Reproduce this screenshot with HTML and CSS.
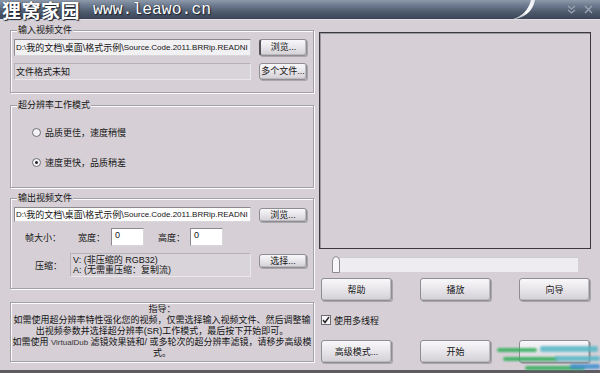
FILE: index.html
```html
<!DOCTYPE html>
<html lang="zh-CN">
<head>
<meta charset="utf-8">
<title>狸窝家园 www.leawo.cn</title>
<link rel="stylesheet" href="styles.css">
</head>
<body>
<div class="window">
  <div class="titlebar">
    <span class="title-cn">狸窝家园</span><span class="title-url">www.leawo.cn</span>
    <svg class="swoosh" width="26" height="19" viewBox="0 0 26 19">
      <defs>
        <linearGradient id="sw" x1="0" y1="1" x2="1" y2="0">
          <stop offset="0" stop-color="#9aa3ae"/>
          <stop offset="0.5" stop-color="#ffffff"/>
          <stop offset="1" stop-color="#e8ecf0"/>
        </linearGradient>
      </defs>
      <path d="M1 19 Q15 15 19 0 L23 0 Q20 15 4 19 Z" fill="url(#sw)"/>
    </svg>
    <div class="controls">
      <svg width="9" height="9" viewBox="0 0 9 9"><path d="M1 1 L4.5 4 L8 1 M1 5 L4.5 8 L8 5" fill="none" stroke="#9da7b3" stroke-width="1.2"/></svg>
      <svg width="9" height="9" viewBox="0 0 9 9"><path d="M1 1 L8 8 M8 1 L1 8" fill="none" stroke="#9da7b3" stroke-width="1.3"/></svg>
    </div>
  </div>

  <div class="main">
    <div class="left">
      <fieldset class="group g1">
        <legend>输入视频文件</legend>
        <div class="row">
          <div class="field path ro"><span class="lat">D:\</span>我的文档\桌面\格式示例\<span class="lat">Source.Code.2011.BRRip.READNI</span></div>
          <button class="btn sm focus">浏览...</button>
        </div>
        <div class="row r2">
          <div class="field path flat">文件格式未知</div>
          <button class="btn sm">多个文件...</button>
        </div>
      </fieldset>

      <fieldset class="group g2">
        <legend>超分辨率工作模式</legend>
        <label class="radio"><span class="dot"></span>品质更佳，速度稍慢</label>
        <label class="radio r2"><span class="dot on"></span>速度更快，品质稍差</label>
      </fieldset>

      <fieldset class="group g3">
        <legend>输出视频文件</legend>
        <div class="row out">
          <div class="field path"><span class="lat">D:\</span>我的文档\桌面\格式示例\<span class="lat">Source.Code.2011.BRRip.READNI</span></div>
          <button class="btn sm">浏览...</button>
        </div>
        <div class="row size">
          <span class="lbl l-frame">帧大小：</span>
          <span class="lbl l-w">宽度：</span>
          <div class="field num">0</div>
          <span class="lbl l-h">高度：</span>
          <div class="field num">0</div>
        </div>
        <div class="row codec">
          <span class="lbl l-c">压缩：</span>
          <div class="field flat multi">V: (非压缩的 RGB32)<br>A: (无需重压缩：复制流)</div>
          <button class="btn sm">选择...</button>
        </div>
      </fieldset>

      <div class="guide">
        指导：<br>
        如需使用超分辨率特性强化您的视频，仅需选择输入视频文件、然后调整输<br>
        出视频参数并选择超分辨率(SR)工作模式，最后按下开始即可。<br>
        如需使用 <span class="small">VirtualDub</span> 滤镜效果链和/ 或多轮次的超分辨率滤镜，请移步高级模<br>
        式。
      </div>
    </div>

    <div class="right">
      <div class="preview"></div>
      <div class="slider">
        <svg class="thumb" width="8" height="17" viewBox="0 0 8 17"><path d="M0.5 16.5 V5 Q0.5 1 4 0.5 Q7.5 1 7.5 5 V16.5 Z" fill="#f7f6f8" stroke="#8d8a90"/></svg>
        <span class="track"></span>
      </div>
      <div class="btn-row">
        <button class="btn lg">帮助</button>
        <button class="btn lg">播放</button>
        <button class="btn lg">向导</button>
      </div>
      <label class="check">
        <span class="box"><svg width="8" height="8" viewBox="0 0 8 8"><path d="M1 4 L3 6.5 L7 1" fill="none" stroke="#222" stroke-width="1.4"/></svg></span>使用多线程
      </label>
      <div class="btn-row r2">
        <button class="btn lg">高级模式...</button>
        <button class="btn lg">开始</button>
        <button class="btn lg"></button>
      </div>
    </div>
  </div>

  <div class="watermark">
    <span class="wm g a"></span>
    <span class="wm g b"></span>
    <span class="wm g c"></span>
    <span class="wm t d"></span>
    <span class="wm t e"></span>
    <span class="wm bl f"></span>
  </div>
</div>
</body>
</html>
```

FILE: styles.css
```css
html, body {
  margin: 0;
  padding: 0;
}

body {
  width: 600px;
  height: 373px;
  overflow: hidden;
  background: #d6d0d6;
  font-family: "Liberation Sans", "Noto Sans CJK SC", sans-serif;
  font-size: 9px;
  color: #141414;
}

.window {
  position: relative;
  height: 373px;
  box-sizing: border-box;
  border-bottom: 3px solid #5e5b61;
}

/* ---------- title bar ---------- */
.titlebar {
  position: relative;
  height: 20px;
  box-sizing: border-box;
  border-bottom: 1px solid #e2dee4;
  background: linear-gradient(#8d99aa 0%, #6b798e 30%, #4d596c 65%, #3b4556 100%);
  display: flex;
  align-items: center;
  padding-left: 2px;
  color: #fff;
  white-space: nowrap;
}

.title-cn {
  font-family: "Noto Sans CJK SC", sans-serif;
  font-size: 19px;
  line-height: 19px;
  letter-spacing: 0.5px;
  font-weight: 700;
  text-shadow: 0 0 1px #1b2230, 1px 1px 1px #1b2230;
}

.title-url {
  font-family: "Liberation Mono", monospace;
  font-size: 16.4px;
  line-height: 19px;
  margin-left: 13px;
  text-shadow: 0 0 1px #1b2230, 1px 1px 1px #1b2230;
}

.swoosh {
  position: absolute;
  left: 512px;
  top: 0;
}

.controls {
  position: absolute;
  right: 7px;
  top: 5px;
  display: flex;
  gap: 8px;
}

/* ---------- layout ---------- */
.main {
  display: flex;
  gap: 4px;
  padding: 5px 0 0 10px;
}

.left {
  width: 305px;
  display: flex;
  flex-direction: column;
}

.right {
  width: 272px;
  display: flex;
  flex-direction: column;
}

/* ---------- group boxes ---------- */
.group {
  box-sizing: border-box;
  width: 304px;
  margin: 0;
  padding: 3px 6px 12px 3px;
  border: 1px solid #a3a0a6;
  box-shadow: inset 1px 1px 0 #fbfafc, 1px 1px 0 #fbfafc;
  min-width: 0;
}

.group legend {
  padding: 0 1px;
  margin-left: 3px;
  line-height: 11px;
  font-size: 9px;
  background: #d6d0d6;
}

.g2 {
  margin-top: 7px;
  padding-top: 14px;
  padding-bottom: 18px;
}

.g3 {
  margin-top: 5px;
  padding-bottom: 11px;
}

.row {
  display: flex;
  align-items: center;
}

.row.r2 {
  margin-top: 7px;
}

/* ---------- fields ---------- */
.field {
  box-sizing: border-box;
  border: 1px solid #8b898e;
  border-right-color: #d8d6da;
  border-bottom-color: #d8d6da;
  background: #fff;
  white-space: nowrap;
  overflow: hidden;
}

.field.path {
  width: 237px;
  height: 17px;
  display: flex;
  align-items: center;
  padding-left: 1px;
}

.field .lat {
  font-size: 8px;
}

.field.ro {
  background: #f1f0f3;
}

.field.flat {
  background: #d9d4da;
  border: 1px solid #b6b2b8;
  border-right-color: #ebe8ec;
  border-bottom-color: #ebe8ec;
}

.out .field.path {
  height: 15px;
}

.size {
  margin-top: 6px;
  height: 18px;
}

.lbl {
  white-space: nowrap;
}

.l-frame { margin-left: 11px; }
.l-w { margin-left: 17px; }
.l-h { margin-left: 14px; }

.field.num {
  width: 33px;
  height: 18px;
  margin-left: 6px;
  padding: 1px 0 0 3px;
  line-height: 11px;
}

.l-h + .field.num {
  margin-left: 5px;
}

.codec {
  margin-top: 7px;
  height: 24px;
}

.l-c {
  margin-left: 21px;
}

.field.multi {
  width: 181px;
  height: 24px;
  margin-left: 8px;
  padding: 1px 0 0 2px;
  line-height: 10px;
}

/* ---------- buttons ---------- */
.btn {
  box-sizing: border-box;
  font-family: inherit;
  font-size: 9px;
  color: #141414;
  padding: 0;
  border: 1px solid #8f8c93;
  border-radius: 3px;
  background: linear-gradient(#f8f7f9 0%, #e9e7eb 45%, #d3d0d6 100%);
  box-shadow: inset -1px -1px 0 #bcb9bf, 1px 1px 0 #a8a5ab;
  white-space: nowrap;
}

.btn.sm {
  width: 48px;
  height: 17px;
  margin-left: 8px;
  line-height: 15px;
}

.out .btn.sm {
  height: 14px;
  line-height: 12px;
}

.codec .btn.sm {
  height: 14px;
  line-height: 12px;
  margin-top: -9px;
}

.btn.focus {
  border-left: 2px solid #555358;
}

.btn.lg {
  width: 71px;
  height: 23px;
}

/* ---------- radios ---------- */
.radio {
  display: flex;
  align-items: center;
  height: 14px;
  padding-left: 18px;
}

.radio.r2 {
  margin-top: 16px;
}

.dot {
  box-sizing: border-box;
  width: 9px;
  height: 9px;
  border: 1px solid #6e6c72;
  border-radius: 50%;
  background: #f4f3f6;
  margin-right: 4px;
  display: flex;
  align-items: center;
  justify-content: center;
}

.dot.on::after {
  content: "";
  width: 3px;
  height: 3px;
  border-radius: 50%;
  background: #222;
}

/* ---------- guide ---------- */
.guide {
  box-sizing: border-box;
  width: 304px;
  height: 60px;
  margin-top: 13px;
  border: 1px solid #a3a0a6;
  box-shadow: inset 1px 1px 0 #fbfafc, 1px 1px 0 #fbfafc;
  text-align: center;
  line-height: 11px;
  padding-top: 1px;
  white-space: nowrap;
  overflow: hidden;
}

.guide .small {
  font-size: 8px;
  color: #333;
}

/* ---------- right side ---------- */
.preview {
  box-sizing: border-box;
  height: 217px;
  margin-top: 7px;
  border: 1px solid #3b393d;
  box-shadow: inset 1px 1px 0 #9c99a0;
}

.slider {
  margin-top: 7px;
  height: 17px;
  display: flex;
  align-items: center;
  padding-left: 13px;
}

.track {
  width: 238px;
  height: 14px;
  background: #eeecf0;
  border-top: 1px solid #cdcad0;
}

.btn-row {
  display: flex;
  gap: 28px;
  padding-left: 2px;
  margin-top: 5px;
}

.btn-row.r2 {
  margin-top: 11px;
}

.check {
  display: flex;
  align-items: center;
  height: 18px;
  margin-top: 10px;
  padding-left: 2px;
}

.box {
  box-sizing: border-box;
  width: 10px;
  height: 10px;
  border: 1px solid #6e6c72;
  background: #f6f5f8;
  margin-right: 3px;
  display: flex;
  align-items: center;
  justify-content: center;
}

/* ---------- watermark overlay ---------- */
.watermark {
  position: absolute;
  left: 495px;
  top: 344px;
  width: 105px;
  height: 29px;
  pointer-events: none;
}

.wm {
  position: absolute;
  height: 4px;
  border-radius: 2px;
  filter: blur(1.2px);
  opacity: 0.85;
}

.wm.g { background: #2fae58; }
.wm.t { background: #58b8c8; }
.wm.bl { background: #3f8fd0; }

.wm.a { left: 2px; top: 4px; width: 40px; }
.wm.b { left: 8px; top: 13px; width: 55px; }
.wm.c { left: 30px; top: 22px; width: 60px; }
.wm.d { left: 45px; top: 2px; width: 58px; height: 6px; }
.wm.e { left: 60px; top: 12px; width: 45px; height: 5px; }
.wm.f { left: 75px; top: 20px; width: 30px; height: 5px; }
```
